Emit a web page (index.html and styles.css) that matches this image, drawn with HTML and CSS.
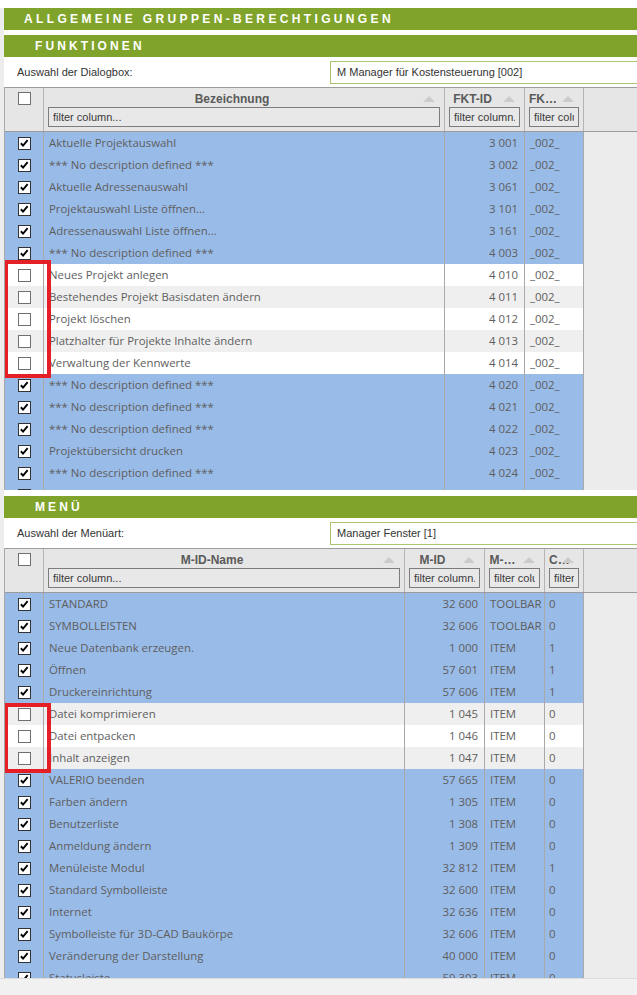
FILE: index.html
```html
<!DOCTYPE html>
<html lang="de">
<head>
  <meta charset="UTF-8" />
  <meta name="viewport" content="width=device-width, initial-scale=1.0" />
  <title>Allgemeine Gruppen-Berechtigungen</title>
  <link rel="stylesheet" href="styles.css">
</head>
<body>
  <div class="page">
    <div class="bar bar-main">ALLGEMEINE GRUPPEN-BERECHTIGUNGEN</div>

    <div class="bar bar-sub">FUNKTIONEN</div>
    <div class="picker">
      <label class="picker-label">Auswahl der Dialogbox:</label>
      <div class="picker-box">M Manager für Kostensteuerung [002]</div>
    </div>
    <div class="grid grid-fkt">
      <div class="grid-head">
        <div class="hcell hcell-cb"><span class="cb"></span></div>
        <div class="hcell"><div class="htitle">Bezeichnung</div><span class="sort"></span><input class="filter" placeholder="filter column..." /></div>
        <div class="hcell"><div class="htitle">FKT-ID</div><span class="sort"></span><input class="filter" placeholder="filter column..." /></div>
        <div class="hcell"><div class="htitle">FK…</div><span class="sort"></span><input class="filter" placeholder="filter column..." /></div>
        <div class="hcell hcell-rest"></div>
      </div>
      <div class="grid-body body-fkt">
        <div class="rows" id="fkt-rows"></div>
        <div class="mark mark-fkt"></div>
      </div>
    </div>

    <div class="bar bar-sub bar-gap">MENÜ</div>
    <div class="picker">
      <label class="picker-label">Auswahl der Menüart:</label>
      <div class="picker-box">Manager Fenster [1]</div>
    </div>
    <div class="grid grid-menu">
      <div class="grid-head">
        <div class="hcell hcell-cb"><span class="cb"></span></div>
        <div class="hcell"><div class="htitle">M-ID-Name</div><span class="sort"></span><input class="filter" placeholder="filter column..." /></div>
        <div class="hcell"><div class="htitle">M-ID</div><span class="sort"></span><input class="filter" placeholder="filter column..." /></div>
        <div class="hcell"><div class="htitle">M-…</div><span class="sort"></span><input class="filter" placeholder="filter column..." /></div>
        <div class="hcell"><div class="htitle">C…</div><span class="sort"></span><input class="filter" placeholder="filter column..." /></div>
        <div class="hcell hcell-rest"></div>
      </div>
      <div class="grid-body body-menu">
        <div class="rows" id="menu-rows"></div>
        <div class="mark mark-menu"></div>
      </div>
    </div>
  </div>
  <div class="footer"></div>

<script>
    const tick = '<svg viewBox="0 0 13 13" width="11" height="11"><path d="M2.2 6.2 L4.8 9 L10.2 2.6" stroke="#000" stroke-width="2.2" fill="none"/></svg>';
    const nd = "*** No description defined ***";

    const fktRows = [
      [1, "Aktuelle Projektauswahl", "3 001"],
      [1, nd, "3 002"],
      [1, "Aktuelle Adressenauswahl", "3 061"],
      [1, "Projektauswahl Liste öffnen...", "3 101"],
      [1, "Adressenauswahl Liste öffnen...", "3 161"],
      [1, nd, "4 003"],
      [0, "Neues Projekt anlegen", "4 010"],
      [0, "Bestehendes Projekt Basisdaten ändern", "4 011"],
      [0, "Projekt löschen", "4 012"],
      [0, "Platzhalter für Projekte Inhalte ändern", "4 013"],
      [0, "Verwaltung der Kennwerte", "4 014"],
      [1, nd, "4 020"],
      [1, nd, "4 021"],
      [1, nd, "4 022"],
      [1, "Projektübersicht drucken", "4 023"],
      [1, nd, "4 024"],
      [1, nd, "4 025"]
    ];

    const menuRows = [
      [1, "STANDARD", "32 600", "TOOLBAR", "0"],
      [1, "SYMBOLLEISTEN", "32 606", "TOOLBAR", "0"],
      [1, "Neue Datenbank erzeugen.", "1 000", "ITEM", "1"],
      [1, "Öffnen", "57 601", "ITEM", "1"],
      [1, "Druckereinrichtung", "57 606", "ITEM", "1"],
      [0, "Datei komprimieren", "1 045", "ITEM", "0"],
      [0, "Datei entpacken", "1 046", "ITEM", "0"],
      [0, "Inhalt anzeigen", "1 047", "ITEM", "0"],
      [1, "VALERIO beenden", "57 665", "ITEM", "0"],
      [1, "Farben ändern", "1 305", "ITEM", "0"],
      [1, "Benutzerliste", "1 308", "ITEM", "0"],
      [1, "Anmeldung ändern", "1 309", "ITEM", "0"],
      [1, "Menüleiste Modul", "32 812", "ITEM", "1"],
      [1, "Standard Symbolleiste", "32 600", "ITEM", "0"],
      [1, "Internet", "32 636", "ITEM", "0"],
      [1, "Symbolleiste für 3D-CAD Baukörpe", "32 606", "ITEM", "0"],
      [1, "Veränderung der Darstellung", "40 000", "ITEM", "0"],
      [1, "Statusleiste", "59 303", "ITEM", "0"]
    ];

    function checkCell(on) {
      return `<div class="cell cell-cb"><span class="cb${on ? " cb-on" : ""}">${on ? tick : ""}</span></div>`;
    }

    function fktRowHTML(r) {
      return `
        <div class="row${r[0] ? " row-sel" : ""}">
          ${checkCell(r[0])}
          <div class="cell">${r[1]}</div>
          <div class="cell cell-num">${r[2]}</div>
          <div class="cell">_002_</div>
          <div class="cell cell-rest"></div>
        </div>`;
    }

    function menuRowHTML(r) {
      return `
        <div class="row${r[0] ? " row-sel" : ""}">
          ${checkCell(r[0])}
          <div class="cell">${r[1]}</div>
          <div class="cell cell-num">${r[2]}</div>
          <div class="cell">${r[3]}</div>
          <div class="cell cell-short">${r[4]}</div>
          <div class="cell cell-rest"></div>
        </div>`;
    }

    document.getElementById("fkt-rows").innerHTML = fktRows.map(fktRowHTML).join("");
    document.getElementById("menu-rows").innerHTML = menuRows.map(menuRowHTML).join("");
  </script>
</body>
</html>
```

FILE: styles.css
```css
html, body {
  margin: 0;
  padding: 0;
  overflow: hidden;
}
body {
  background: #fff;
  color: #333;
  font-family: 'Liberation Sans', Arial, sans-serif;
  font-size: 11px;
}
.page {
  margin-top: 8px;
  border-left: 4px solid #ededed;
}
.bar {
  height: 22px;
  line-height: 22px;
  background-color: #80a42b;
  color: #fff;
  font-weight: bold;
  font-size: 12px;
  letter-spacing: 3.1px;
  white-space: nowrap;
}
.bar-main {
  padding-left: 20px;
  margin-bottom: 5px;
  letter-spacing: 3.35px;
}
.bar-sub {
  padding-left: 31px;
}
.bar-gap {
  margin-top: 6px;
}
.picker {
  display: flex;
  align-items: center;
  height: 30px;
  white-space: nowrap;
}
.picker-label {
  flex: 0 0 326px;
  padding-left: 13px;
  box-sizing: border-box;
}
.picker-box {
  flex: none;
  width: 330px;
  height: 23px;
  line-height: 21px;
  margin-top: 1px;
  box-sizing: border-box;
  border: 1px solid #abc46f;
  padding-left: 6px;
  background: #fff;
}
.grid {
  border-left: 1px solid #a8a8a8;
}
.grid-head, .row {
  display: grid;
}
.grid-fkt .grid-head, .grid-fkt .row {
  grid-template-columns: 39px 401px 80px 59px 1fr;
}
.grid-menu .grid-head, .grid-menu .row {
  grid-template-columns: 39px 361px 80px 60px 39px 1fr;
}
.grid-head {
  height: 45px;
  box-sizing: border-box;
  background: #e6e6e6;
  border-top: 1px solid #9c9c9c;
  border-bottom: 1px solid #9c9c9c;
}
.hcell {
  position: relative;
  border-right: 1px solid #b4b4b4;
  padding: 3px 4px 0 4px;
  min-width: 0;
}
.hcell-cb {
  display: flex;
  justify-content: center;
  padding-top: 4px;
}
.hcell-rest {
  border-right: none;
}
.htitle {
  height: 16px;
  line-height: 16px;
  padding-right: 24px;
  text-align: center;
  font-weight: bold;
  font-size: 12px;
  color: #5a5a5a;
  white-space: nowrap;
  overflow: hidden;
}
.sort {
  position: absolute;
  right: 9px;
  top: 8px;
  width: 0;
  height: 0;
  border-left: 6px solid transparent;
  border-right: 6px solid transparent;
  border-bottom: 6px solid #cbcbcb;
}
.filter {
  display: block;
  width: 100%;
  height: 20px;
  margin: 0;
  box-sizing: border-box;
  border: 1px solid #7c7c7c;
  background: #e8e8e8;
  padding: 0 4px;
  font-family: 'Liberation Sans', Arial, sans-serif;
  font-size: 11px;
  color: #333;
}
.filter::placeholder {
  color: #3a3a3a;
  opacity: 1;
}
.grid-body {
  position: relative;
  overflow: hidden;
  background: #ececec;
}
.body-fkt {
  height: 358px;
}
.body-menu {
  height: 385px;
}
.row {
  height: 22px;
}
.cell {
  height: 22px;
  line-height: 22px;
  padding: 0 5px;
  border-right: 1px solid #a9a9a9;
  background: #fff;
  font-family: 'Open Sans', sans-serif;
  font-size: 11.4px;
  color: #5e5e5e;
  white-space: nowrap;
  overflow: hidden;
}
.row:nth-child(even) .cell {
  background: #efefef;
}
.row-sel .cell,
.row-sel:nth-child(even) .cell {
  background: #99bbe8;
}
.row .cell-rest,
.row:nth-child(even) .cell-rest {
  background: transparent;
  border-right: none;
}
.cell-num {
  text-align: right;
  padding-right: 6px;
}
.cell-short {
  padding-left: 4px;
}
.cell-cb {
  display: flex;
  justify-content: center;
  align-items: center;
  padding: 0;
}
.cb {
  display: flex;
  align-items: center;
  justify-content: center;
  width: 13px;
  height: 13px;
  box-sizing: border-box;
  border: 1px solid #707070;
  background: #fff;
}
.cb-on {
  border-color: #333;
}
.mark {
  position: absolute;
  left: -1px;
  width: 47px;
  box-sizing: border-box;
  border: 4px solid #e41f26;
}
.mark-fkt {
  top: 128px;
  height: 118px;
}
.mark-menu {
  top: 110px;
  height: 70px;
}
.footer {
  height: 17px;
  background: #f1f1f1;
  border-top: 1px solid #dcdcdc;
}
```
